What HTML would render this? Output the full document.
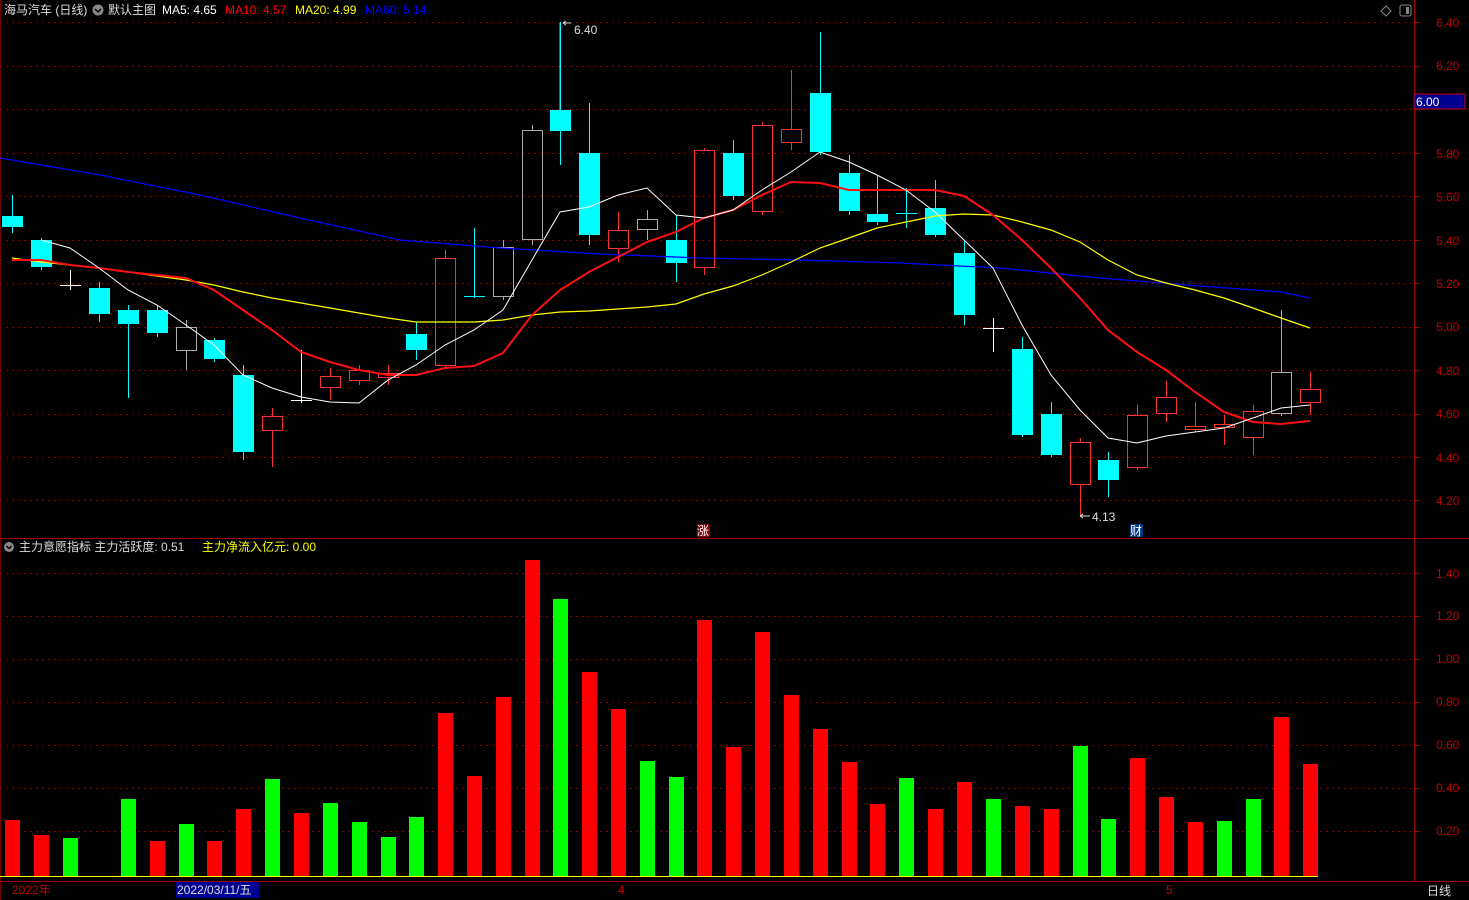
<!DOCTYPE html>
<html><head><meta charset="utf-8"><style>
html,body{margin:0;padding:0;background:#000;width:1469px;height:900px;overflow:hidden}
svg{display:block}
text{font-family:"Liberation Sans","Noto Sans CJK SC",sans-serif;font-size:12px}
</style></head><body>
<svg id="s" width="1469" height="900" xmlns="http://www.w3.org/2000/svg">
<rect width="1469" height="900" fill="#000"/>
<g id="grid"></g>
<line x1="1414.5" y1="0" x2="1414.5" y2="882" stroke="#a00000"/>
<line x1="0" y1="538.5" x2="1469" y2="538.5" stroke="#a00000"/>
<line x1="0" y1="881.5" x2="1469" y2="881.5" stroke="#a00000"/>
<line x1="0.5" y1="0" x2="0.5" y2="900" stroke="#700000"/>
<g id="c"></g>
<g id="v"></g>
<line x1="0" y1="876.5" x2="1318" y2="876.5" stroke="#ffff00"/>
<!-- header -->
<text x="4" y="14" fill="#ddd" font-size="13">海马汽车 (日线)</text>
<circle cx="98" cy="10" r="5.5" fill="#888"/><path d="M95 9 l3 3 l3 -3" stroke="#000" fill="none" stroke-width="1.5"/>
<text x="108" y="14" fill="#ddd" font-size="13">默认主图</text>
<text x="162" y="14" fill="#fff" font-size="13">MA5: 4.65</text>
<text x="225" y="14" fill="#f00" font-size="13">MA10: 4.57</text>
<text x="295" y="14" fill="#ff0" font-size="13">MA20: 4.99</text>
<text x="365" y="14" fill="#00f" font-size="13">MA60: 5.14</text>
<path d="M1386 6 l5 5 l-5 5 l-5 -5z" stroke="#888" fill="none"/>
<rect x="1400" y="5" width="11" height="11" rx="2" stroke="#888" fill="none"/><rect x="1406" y="7" width="3" height="7" fill="#888"/>
<text x="4" y="551" fill="#ddd" font-size="12">&#8203;</text>
<circle cx="9" cy="547" r="5" fill="#888"/><path d="M6.5 546 l2.5 2.5 l2.5 -2.5" stroke="#000" fill="none" stroke-width="1.5"/>
<text x="19" y="551" fill="#ddd">主力意愿指标  主力活跃度: 0.51</text>
<text x="202" y="551" fill="#ff0">主力净流入亿元: 0.00</text>
<!-- annotations -->
<line x1="560" y1="23" x2="560" y2="110" stroke="#0ff"/>
<text x="574" y="34" fill="#ddd">6.40</text><path d="M563 23 h8 M563 23 l3 -2 M563 23 l3 2" stroke="#ddd" fill="none"/>
<text x="1092" y="521" fill="#ddd">4.13</text><path d="M1080 516 h10 M1080 516 l3 -2 M1080 516 l3 2" stroke="#ddd" fill="none"/>
<rect x="697" y="524" width="13" height="13" fill="#800"/><text x="697" y="535" fill="#fff" font-size="12">涨</text>
<rect x="1130" y="524" width="13" height="13" fill="#003a80"/><text x="1130" y="535" fill="#fff" font-size="12">财</text>
<!-- right axis -->
<g fill="#c00000" font-size="12">
<text x="1436" y="27">6.40</text><text x="1436" y="70">6.20</text><text x="1436" y="158">5.80</text><text x="1436" y="201">5.60</text><text x="1436" y="245">5.40</text><text x="1436" y="288">5.20</text><text x="1436" y="331">5.00</text><text x="1436" y="375">4.80</text><text x="1436" y="418">4.60</text><text x="1436" y="462">4.40</text><text x="1436" y="505">4.20</text>
<text x="1436" y="578">1.40</text><text x="1436" y="620">1.20</text><text x="1436" y="663">1.00</text><text x="1436" y="706">0.80</text><text x="1436" y="749">0.60</text><text x="1436" y="792">0.40</text><text x="1436" y="835">0.20</text>
</g>
<rect x="1414" y="94" width="51" height="15" fill="#000090" stroke="#c00"/>
<text x="1416" y="106" fill="#fff">6.00</text>
<!-- bottom -->
<text x="12" y="894" fill="#c00000">2022年</text>
<rect x="176" y="882" width="84" height="16" fill="#000090"/>
<text x="177" y="894" fill="#ddd">2022/03/11/五</text>
<text x="618" y="894" fill="#c00000">4</text>
<text x="1166" y="894" fill="#c00000">5</text>
<text x="1427" y="895" fill="#ddd">日线</text>
</svg>
<script>
var NS="http://www.w3.org/2000/svg";
function el(p,t,a){var e=document.createElementNS(NS,t);for(var k in a)e.setAttribute(k,a[k]);p.appendChild(e);return e;}
var g=document.getElementById('grid');
[22,66,109,153,196,240,283,327,370,414,457,500,573,616,659,702,745,788,831].forEach(function(y){
 el(g,'line',{x1:0,y1:y+.5,x2:1414,y2:y+.5,stroke:'#8a0000','stroke-dasharray':'2,4'});
 el(g,'line',{x1:1414,y1:y+.5,x2:1420,y2:y+.5,stroke:'#a00000'});
});
var C=[[12,216,227,195,233,'c'],[41,240,267,238,270,'c'],[70,285,285,270,290,'w'],[99,288,314,282,322,'c'],[128,310,324,305,398,'c'],[157,310,333,305,337,'c'],[186,327,351,320,370,'g'],[214,340,359,338,362,'c'],[243,375,452,365,460,'c'],[272,416,431,408,467,'r'],[301,400,400,350,403,'w'],[330,376,388,368,400,'r'],[359,370,381,365,385,'r'],[388,373,378,365,385,'r'],[416,334,350,322,360,'c'],[445,258,366,250,368,'r'],[474,296,296,228,298,'c'],[503,247,297,240,300,'g'],[532,130,240,125,245,'g'],[560,110,131,22,165,'c'],[589,153,235,103,245,'c'],[618,230,249,212,262,'r'],[647,219,230,210,240,'g'],[676,240,263,215,282,'c'],[704,150,268,148,275,'r'],[733,153,196,140,200,'c'],[762,125,212,122,215,'r'],[791,129,143,70,150,'r'],[820,93,152,32,155,'c'],[849,173,211,155,215,'c'],[877,214,222,175,225,'c'],[906,213,213,188,228,'c'],[935,208,235,180,237,'c'],[964,253,315,240,325,'c'],[993,328,328,318,352,'w'],[1022,349,435,337,437,'c'],[1051,414,455,402,457,'c'],[1080,442,485,438,515,'r'],[1108,460,480,452,497,'c'],[1137,415,468,405,470,'r'],[1166,397,414,381,422,'r'],[1195,426,430,402,432,'r'],[1224,424,428,415,445,'r'],[1253,411,438,405,455,'r'],[1281,372,414,310,416,'g'],[1310,389,403,372,415,'r']];
var cg=document.getElementById('c');
var col={c:'#00ffff',r:'#ff3232',w:'#ffffff',g:'#aaaaaa'};
C.forEach(function(d){var x=d[0],c=col[d[5]];
 if(d[5]=='c'){el(cg,'line',{x1:x+.5,y1:d[3],x2:x+.5,y2:d[4],stroke:c});el(cg,'rect',{x:x-10,y:d[1],width:21,height:Math.max(1,d[2]-d[1]),fill:c});}
 else{el(cg,'line',{x1:x+.5,y1:d[3],x2:x+.5,y2:d[1],stroke:c});el(cg,'line',{x1:x+.5,y1:d[2],x2:x+.5,y2:d[4],stroke:c});
  if(d[2]-d[1]<2)el(cg,'line',{x1:x-10,y1:d[1]+.5,x2:x+11,y2:d[1]+.5,stroke:c});
  else el(cg,'rect',{x:x-9.5,y:d[1]+.5,width:20,height:d[2]-d[1]-1,fill:'none',stroke:c});}
});
function pl(pts,c,w){el(cg,'polyline',{points:pts.map(function(p){return p.join(',')}).join(' '),fill:'none',stroke:c,'stroke-width':w});}
var xs=C.map(function(d){return d[0]});
function z(a,o){return a.map(function(y,i){return [xs[i+(o||0)],y]});}
pl([[0,158],[100,175],[200,195],[300,218],[400,240],[500,248],[600,254],[700,258],[800,260],[900,263],[1000,268],[1100,278],[1200,286],[1281,292],[1310,298]],'#0000ff',1.2);
pl(z([258,262,265,268,272,276,280,285,292,298,303,308,313,318,322,322,322,320,315,312,311,309,307,304,294,286,275,262,248,238,228,222,216,214,215,222,230,242,260,275,283,290,298,308,318,328]),'#ffff00',1.2);
pl(z([260,260,265,268,272,275,278,290,310,330,352,362,370,375,375,368,366,353,315,290,272,257,242,232,218,210,195,182,183,190,190,190,190,196,215,240,268,298,330,352,370,392,412,422,424,421]),'#ff1010',2);
pl(z([240,248,268,290,305,325,345,375,388,397,402,403,380,365,345,330,310,260,212,207,195,188,215,218,210,190,172,152,162,175,190,212,240,268,325,375,410,438,443,436,432,428,418,408,405],1),'#ffffff',1);
var V=[[12,820,'r'],[41,835,'r'],[70,838,'g'],[128,799,'g'],[157,841,'r'],[186,824,'g'],[214,841,'r'],[243,809,'r'],[272,779,'g'],[301,813,'r'],[330,803,'g'],[359,822,'g'],[388,837,'g'],[416,817,'g'],[445,713,'r'],[474,776,'r'],[503,697,'r'],[532,560,'r'],[560,599,'g'],[589,672,'r'],[618,709,'r'],[647,761,'g'],[676,777,'g'],[704,620,'r'],[733,747,'r'],[762,632,'r'],[791,695,'r'],[820,729,'r'],[849,762,'r'],[877,804,'r'],[906,778,'g'],[935,809,'r'],[964,782,'r'],[993,799,'g'],[1022,806,'r'],[1051,809,'r'],[1080,746,'g'],[1108,819,'g'],[1137,758,'r'],[1166,797,'r'],[1195,822,'r'],[1224,821,'g'],[1253,799,'g'],[1281,717,'r'],[1310,764,'r']];
var vg=document.getElementById('v');
V.forEach(function(d){el(vg,'rect',{x:d[0]-7,y:d[1],width:15,height:876-d[1],fill:d[2]=='r'?'#ff0000':'#00ff00'});});
</script>
</body></html>
